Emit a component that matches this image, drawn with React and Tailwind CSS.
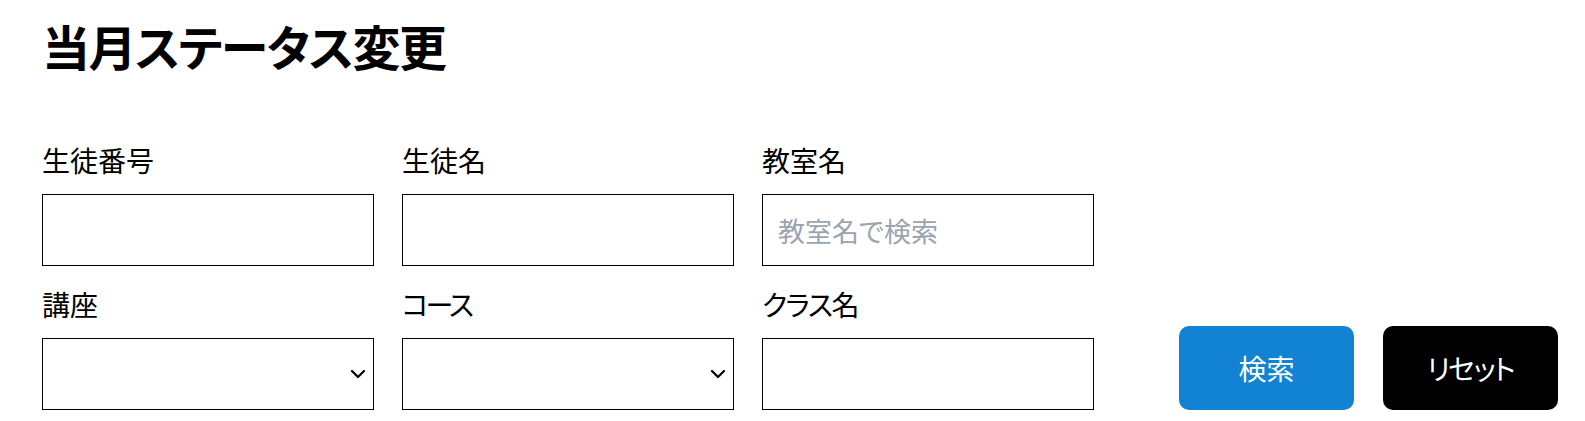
import React from 'react';

const font = {
  fontFamily: '"Noto Sans CJK JP", "Noto Sans", sans-serif',
};

const Chevron = () => (
  <svg
    className="pointer-events-none absolute right-[8px] top-1/2 -translate-y-1/2"
    width="16"
    height="10"
    viewBox="0 0 16 10"
    fill="none"
  >
    <path d="M2 2l6 6 6-6" stroke="#000" strokeWidth="2.2" strokeLinecap="round" strokeLinejoin="round" />
  </svg>
);

const Field = ({ label, labelClass = '', type = 'text', placeholder }) => (
  <div className="flex flex-col">
    <label className={`mb-[16px] text-[28px] leading-[36px] text-black ${labelClass}`}>{label}</label>
    {type === 'select' ? (
      <div className="relative">
        <select className="h-[72px] w-full appearance-none border border-black bg-white px-[15px] text-[27px] outline-none">
          <option value=""></option>
        </select>
        <Chevron />
      </div>
    ) : (
      <input
        type="text"
        placeholder={placeholder}
        className="h-[72px] w-full border border-black bg-white px-[15px] text-[27px] text-black outline-none placeholder:text-[#9aa3b0]"
      />
    )}
  </div>
);

export default function App() {
  return (
    <div className="min-h-[421px] bg-white pl-[42px] pt-[15px] [font-feature-settings:'palt']" style={font}>
      <h1 className="text-[48px] font-bold leading-[60px] tracking-[-1.5px] text-black">当月ステータス変更</h1>

      <div className="mt-[67px] flex items-end">
        <div className="grid w-[1052px] shrink-0 grid-cols-3 gap-x-[28px] gap-y-[20px]">
          <Field label="生徒番号" />
          <Field label="生徒名" />
          <Field label="教室名" placeholder="教室名で検索" />
          <Field label="講座" type="select" />
          <Field label="コース" labelClass="tracking-[-3px]" type="select" />
          <Field label="クラス名" labelClass="tracking-[-1.5px]" />
        </div>

        <div className="ml-[85px] flex shrink-0 gap-[29px]">
          <button className="h-[84px] w-[175px] rounded-[10px] bg-[#1282d3] text-[28px] text-white">
            検索
          </button>
          <button className="h-[84px] w-[175px] rounded-[10px] bg-black text-[28px] tracking-[-1.5px] text-white">
            リセット
          </button>
        </div>
      </div>
    </div>
  );
}
